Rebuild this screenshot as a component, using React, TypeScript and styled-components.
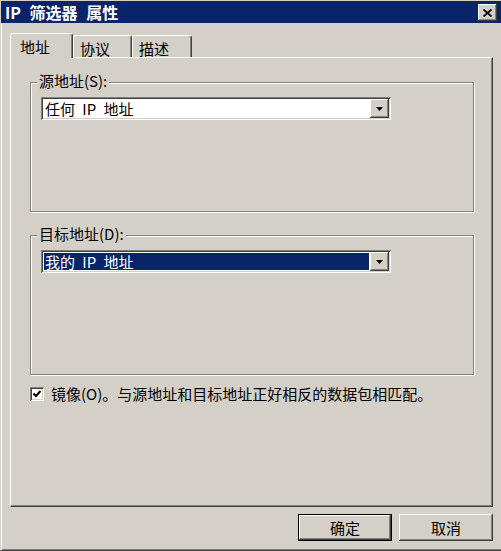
import styled, { createGlobalStyle, css } from "styled-components";

const face = "#d4d0c8";
const navy = "#0a246a";

const GlobalStyle = createGlobalStyle`
  html, body {
    margin: 0;
    padding: 0;
    background: ${face};
  }
  body {
    font-family: "Noto Sans CJK SC", sans-serif;
    font-size: 15px;
    color: #000;
  }
`;

const raised = css`
  box-shadow: inset -1px -1px #404040, inset 1px 1px #ffffff,
    inset -2px -2px #808080, inset 2px 2px ${face};
`;

const sunken = css`
  box-shadow: inset 1px 1px #808080, inset -1px -1px #ffffff,
    inset 2px 2px #404040, inset -2px -2px ${face};
`;

const Window = styled.div`
  box-sizing: border-box;
  width: 501px;
  height: 551px;
  background: ${face};
  border-top: 1px solid ${face};
  border-left: 1px solid ${face};
  border-bottom: 1px solid #404040;
  box-shadow: inset 0 -1px #808080;
  display: flex;
  flex-direction: column;
`;

const TitleBar = styled.div`
  height: 22px;
  flex: none;
  background: ${navy};
  display: flex;
  align-items: center;
  justify-content: space-between;
  padding: 0 4px 0 4px;
`;

const Title = styled.span`
  color: #fff;
  font-weight: bold;
  font-size: 16px;
  line-height: 18px;
  word-spacing: 5px;
`;

const CloseButton = styled.div`
  box-sizing: border-box;
  width: 19px;
  height: 17px;
  background: ${face};
  ${raised};
  display: flex;
  align-items: center;
  justify-content: center;
  padding: 1px 0 0 0;
`;

const Body = styled.div`
  flex: 1;
  padding: 10px 8px 0 9px;
  box-shadow: inset 1px 0 #fff;
  display: flex;
  flex-direction: column;
`;

const TabStrip = styled.div`
  height: 24px;
  display: flex;
  align-items: flex-end;
  padding-left: 2px;
  position: relative;
  z-index: 1;
`;

const Tab = styled.div<{ $active?: boolean; $w: number }>`
  box-sizing: border-box;
  width: ${(p) => p.$w}px;
  height: ${(p) => (p.$active ? 25 : 22)}px;
  margin-left: ${(p) => (p.$active ? -2 : 0)}px;
  margin-bottom: ${(p) => (p.$active ? -1 : 0)}px;
  padding: 5px 0 0 ${(p) => (p.$active ? 9 : 6)}px;
  line-height: 16px;
  background: ${face};
  border-top: 1px solid #fff;
  border-left: 1px solid #fff;
  border-right: 1px solid #404040;
  border-radius: 3px 3px 0 0;
  box-shadow: inset -1px 0 #808080;
  position: relative;
  z-index: ${(p) => (p.$active ? 2 : 1)};
`;

const TabPanel = styled.div`
  box-sizing: border-box;
  height: 450px;
  border-top: 1px solid #fff;
  border-left: 1px solid #fff;
  border-right: 1px solid #404040;
  border-bottom: 1px solid #404040;
  box-shadow: inset -1px -1px #808080;
  padding: 24px 18px 0 19px;
  display: flex;
  flex-direction: column;
`;

const GroupBox = styled.div<{ $h: number; $gap?: number }>`
  position: relative;
  box-sizing: border-box;
  height: ${(p) => p.$h}px;
  margin-top: ${(p) => p.$gap ?? 0}px;
  border: 1px solid #808080;
  box-shadow: inset 1px 1px #fff, 1px 1px #fff;
  padding: 14px 0 0 10px;
`;

const Legend = styled.span`
  position: absolute;
  top: -10px;
  left: 6px;
  padding: 0 2px;
  background: ${face};
  line-height: 16px;
`;

const Combo = styled.div`
  box-sizing: border-box;
  width: 350px;
  height: 23px;
  padding: 2px;
  background: #fff;
  ${sunken};
  display: flex;
`;

const Field = styled.div`
  flex: 1;
  padding: 1px;
  display: flex;
`;

const Value = styled.span<{ $selected?: boolean }>`
  flex: 1;
  padding-left: 1px;
  line-height: 17px;
  word-spacing: 4px;
  background: ${(p) => (p.$selected ? navy : "#fff")};
  color: ${(p) => (p.$selected ? "#fff" : "#000")};
`;

const DropButton = styled.div`
  box-sizing: border-box;
  width: 19px;
  background: ${face};
  ${raised};
  display: flex;
  align-items: center;
  justify-content: center;
`;

const CheckRow = styled.label`
  margin-top: 11px;
  display: flex;
  align-items: center;
  gap: 7px;
  line-height: 16px;
`;

const CheckBox = styled.span`
  box-sizing: border-box;
  width: 14px;
  height: 14px;
  background: #fff;
  ${sunken};
  display: flex;
  align-items: center;
  justify-content: center;
`;

const ButtonRow = styled.div`
  margin-top: 7px;
  display: flex;
  justify-content: flex-end;
  gap: 7px;
`;

const Button = styled.div<{ $default?: boolean }>`
  box-sizing: border-box;
  width: 94px;
  height: 27px;
  background: ${face};
  display: flex;
  align-items: center;
  justify-content: center;
  line-height: 16px;
  ${raised};
  ${(p) =>
    p.$default &&
    css`
      border: 1px solid #000;
    `}
`;

const DropArrow = () => (
  <svg width="7" height="4" viewBox="0 0 7 4">
    <polygon points="0,0 7,0 3.5,4" fill="#000" />
  </svg>
);

const CloseIcon = () => (
  <svg width="9" height="8" viewBox="0 0 9 8">
    <path d="M0.5 0.5 L8.5 7.5 M8.5 0.5 L0.5 7.5" stroke="#000" strokeWidth="1.8" fill="none" />
  </svg>
);

const CheckMark = () => (
  <svg width="8" height="8" viewBox="0 0 8 8">
    <path d="M0.5 3.5 L3 6 L7.5 1" stroke="#000" strokeWidth="2" fill="none" />
  </svg>
);

const App = () => {
  return (
    <>
      <GlobalStyle />
      <Window>
        <TitleBar>
          <Title>IP 筛选器 属性</Title>
          <CloseButton>
            <CloseIcon />
          </CloseButton>
        </TitleBar>
        <Body>
          <TabStrip>
            <Tab $active $w={63}>地址</Tab>
            <Tab $w={59}>协议</Tab>
            <Tab $w={60}>描述</Tab>
          </TabStrip>
          <TabPanel>
            <GroupBox $h={130}>
              <Legend>源地址(S):</Legend>
              <Combo>
                <Field>
                  <Value>任何 IP 地址</Value>
                </Field>
                <DropButton>
                  <DropArrow />
                </DropButton>
              </Combo>
            </GroupBox>
            <GroupBox $h={140} $gap={23}>
              <Legend>目标地址(D):</Legend>
              <Combo>
                <Field>
                  <Value $selected>我的 IP 地址</Value>
                </Field>
                <DropButton>
                  <DropArrow />
                </DropButton>
              </Combo>
            </GroupBox>
            <CheckRow>
              <CheckBox>
                <CheckMark />
              </CheckBox>
              <span>镜像(O)。与源地址和目标地址正好相反的数据包相匹配。</span>
            </CheckRow>
          </TabPanel>
          <ButtonRow>
            <Button $default>确定</Button>
            <Button>取消</Button>
          </ButtonRow>
        </Body>
      </Window>
    </>
  );
};

export default App;
